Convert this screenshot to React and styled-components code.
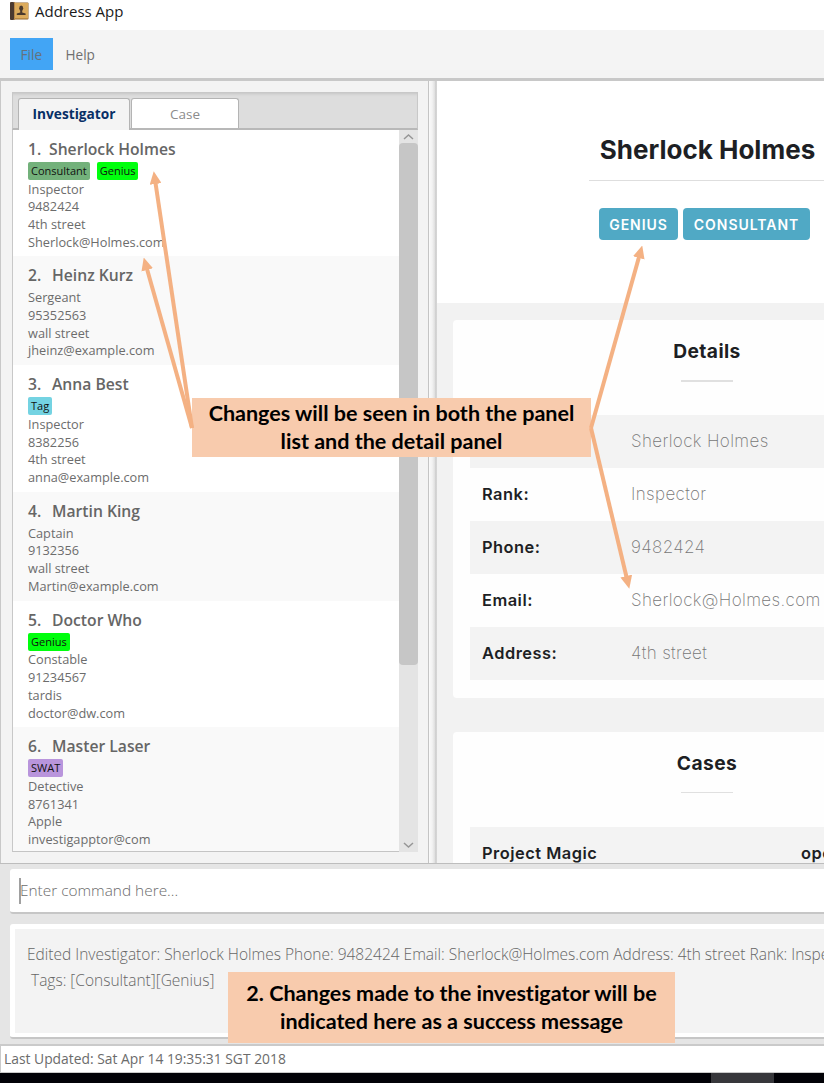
import React from "react";
import styled, { createGlobalStyle } from "styled-components";

const UI = '"Open Sans", "Noto Sans", sans-serif';
const WEB = 'Inter, "Open Sans", sans-serif';

const GlobalStyle = createGlobalStyle`
  * { box-sizing: border-box; }
  html, body { margin: 0; padding: 0; overflow: hidden; background: #fff; }
  body { font-family: ${UI}; color: #6b6b6b; }
`;

const Window = styled.div`
  position: relative;
  display: flex;
  flex-direction: column;
  width: 824px;
  height: 1083px;
  overflow: hidden;
  background: #e5e5e5;
`;

const TitleBar = styled.header`
  display: flex;
  align-items: center;
  flex: none;
  height: 30px;
  padding: 0 0 9px 10px;
  gap: 6px;
  background: #fff;
  color: #1a1a1a;
  font-size: 15px;
  line-height: 22px;
`;

const MenuBar = styled.nav`
  display: flex;
  flex: none;
  height: 51px;
  padding: 8px 10px 0;
  background: #f4f4f4;
  border-bottom: 3px solid #c8c8c8;
`;

const MenuItem = styled.div`
  height: 32px;
  padding: 0 ${(p) => (p.$active ? 10.5 : 13)}px;
  line-height: 33px;
  font-size: 13.6px;
  color: ${(p) => (p.$active ? "#65717c" : "#707070")};
  background: ${(p) => (p.$active ? "#42a5f5" : "transparent")};
`;

const Main = styled.main`
  display: flex;
  flex: none;
  height: 783px;
  border-bottom: 1px solid #bdbdbd;
  background: #f3f3f3;
`;

const ListPane = styled.section`
  flex: none;
  width: 429px;
  padding: 11px 10px 0 11px;
  border-left: 1px solid #c8c8c8;
  border-right: 1px solid #c4c4c4;
`;

const TabHeader = styled.div`
  display: flex;
  align-items: flex-end;
  height: 38px;
  padding-left: 5px;
  gap: 1px;
  background: #ddd;
  border: 1px solid #c8c8c8;
  border-bottom: 2px solid #b8b8b8;
  box-shadow: inset 0 3px 3px -2px #c4c4c4;
`;

const Tab = styled.div`
  width: ${(p) => p.$width}px;
  height: ${(p) => (p.$selected ? 32 : 30)}px;
  margin-bottom: ${(p) => (p.$selected ? -2 : 0)}px;
  border: 1px solid #b4b4b4;
  border-bottom: 0;
  border-radius: 3px 3px 0 0;
  background: ${(p) => (p.$selected ? "#f4f4f4" : "#fff")};
  color: ${(p) => (p.$selected ? "#072f66" : "#8c8c8c")};
  font-size: ${(p) => (p.$selected ? 13.7 : 13.5)}px;
  font-weight: ${(p) => (p.$selected ? 700 : 400)};
  line-height: 30px;
  text-align: center;
`;

const ListView = styled.div`
  display: flex;
  height: 722px;
  overflow: hidden;
`;

const Rows = styled.div`
  flex: 1;
  overflow: hidden;
  border-left: 1px solid #c8c8c8;
  border-bottom: 1px solid #c4c4c4;
  background: #fff;
`;

const Row = styled.article`
  height: ${(p) => (p.$tagged ? 126.4 : 109)}px;
  padding: 8px 0 0 15px;
  background: ${(p) => (p.$even ? "#f9f9f9" : "#fff")};
`;

const Name = styled.h2`
  display: flex;
  height: 24px;
  margin: 0;
  font-size: 15.7px;
  font-weight: 600;
  line-height: 22px;
  color: #666;
`;

const Index = styled.span`
  width: ${(p) => (p.$narrow ? 21 : 24)}px;
`;

const Tags = styled.div`
  display: flex;
  gap: 7px;
  height: 17.7px;
`;

const Tag = styled.span`
  height: 18px;
  padding: 0 3px;
  border-radius: 2px;
  background: ${(p) => p.$color};
  color: #111;
  font-size: 11px;
  line-height: 18px;
`;

const Info = styled.div`
  height: 17.7px;
  font-size: 12.75px;
  line-height: 19px;
  color: #6c6c6c;
`;

const ScrollBar = styled.div`
  display: flex;
  flex-direction: column;
  justify-content: space-between;
  width: 19px;
  background: #e4e4e4;
`;

const Thumb = styled.div`
  flex: none;
  height: 522px;
  margin-bottom: auto;
  border-radius: 4px;
  background: #c6c6c6;
`;

const Chevron = styled.svg`
  display: block;
  flex: none;
  width: 19px;
  height: 13px;
  fill: none;
  stroke: #969696;
  stroke-width: 1.5;
`;

const Divider = styled.div`
  flex: none;
  width: 8px;
  background: linear-gradient(90deg, #fafafa 0, #f2f2f2 40%, #dedede 75%, #cacaca 85%, #dcdcdc 100%);
`;

const Browser = styled.section`
  flex: none;
  width: 541px;
  height: 782px;
  overflow: hidden;
  background: #f2f2f2;
  color: #1d1f24;
  font-family: ${WEB};
`;

const Hero = styled.div`
  display: flex;
  flex-direction: column;
  align-items: center;
  height: 222px;
  padding-top: 48px;
  background: #fff;
`;

const HeroName = styled.h1`
  width: 237px;
  height: 52px;
  margin: 0;
  border-bottom: 1px solid #dedede;
  font-size: 26px;
  font-weight: 650;
  line-height: 42px;
  text-align: center;
  white-space: nowrap;
`;

const Badges = styled.div`
  display: flex;
  gap: 5px;
  margin: 27px 6px 0 0;
`;

const Badge = styled.span`
  width: ${(p) => p.$width}px;
  height: 32px;
  border-radius: 4px;
  background: #50a9c5;
  color: #fff;
  font-size: 14px;
  font-weight: 600;
  letter-spacing: 0.95px;
  line-height: 34px;
  text-align: center;
`;

const Card = styled.div`
  width: 508px;
  height: ${(p) => p.$height}px;
  margin: ${(p) => p.$top}px 0 0 16px;
  padding: 0 17px;
  border-radius: 4px;
  background: #fefefe;
`;

const CardTitle = styled.h3`
  height: 60px;
  margin: 0;
  padding-top: 17px;
  font-size: 19.2px;
  font-weight: 650;
  letter-spacing: 0.4px;
  line-height: 28px;
  text-align: center;
`;

const Rule = styled.div`
  width: 52px;
  height: ${(p) => p.$height}px;
  margin: 0 auto ${(p) => 35 - p.$height}px;
  background: #e0e0e0;
`;

const Field = styled.div`
  display: flex;
  height: 53.1px;
  padding-left: 12px;
  background: ${(p) => (p.$shaded ? "#f3f3f3" : "transparent")};
  line-height: 53px;
  white-space: nowrap;
`;

const Label = styled.div`
  width: ${(p) => p.$width}px;
  flex: none;
  font-size: 16.4px;
  font-weight: 600;
  letter-spacing: 0.5px;
`;

const Value = styled.div`
  color: #777;
  font-size: 17px;
  font-weight: 250;
  letter-spacing: 0.36px;
`;

const CommandBox = styled.div`
  display: flex;
  align-items: center;
  flex: none;
  width: 830px;
  height: 45px;
  margin: 5px 0 0 10px;
  padding-left: 9px;
  border-bottom: 2px solid #c6c6c6;
  border-radius: 3px;
  background: #fff;
  color: #6c6c6c;
  font-size: 15.4px;
  font-weight: 300;
`;

const Caret = styled.i`
  width: 2px;
  height: 26px;
  margin-right: -1px;
  background: #a0a0a0;
`;

const ResultBox = styled.div`
  flex: none;
  width: 900px;
  height: 115px;
  margin: 10px 0 0 10px;
  padding: 5px 5px 4px;
  border-bottom: 2px solid #c6c6c6;
  border-radius: 3px;
  background: #fff;
`;

const ResultText = styled.pre`
  height: 104px;
  margin: 0;
  padding: 12px;
  background: #f3f3f3;
  color: #666;
  font-family: ${UI};
  font-size: 15.5px;
  font-weight: 300;
  line-height: 26px;
`;

const StatusBar = styled.footer`
  flex: none;
  height: 29px;
  margin-top: 5px;
  padding-left: 3px;
  border: 1px solid #cacaca;
  border-top-width: 2px;
  border-right: 0;
  background: #fff;
  font-size: 13.85px;
  line-height: 26px;
`;

const Taskbar = styled.div`
  flex: 1;
  padding-left: 711px;
  background: #020207;
  &::before {
    content: "";
    display: block;
    width: 63px;
    height: 100%;
    background: #37373b;
  }
`;

const Arrows = styled.svg`
  position: absolute;
  left: 0;
  top: 0;
  fill: none;
  stroke: #f4b183;
  stroke-width: 4;
`;

const Callout = styled.div`
  position: absolute;
  left: ${(p) => p.$x}px;
  top: ${(p) => p.$y}px;
  width: ${(p) => p.$w}px;
  height: ${(p) => p.$h}px;
  padding-top: ${(p) => p.$pad}px;
  background: #f8cbad;
  color: #000;
  font-family: Lato, sans-serif;
  font-size: 21.55px;
  font-weight: 700;
  font-variant-ligatures: none;
  line-height: 28px;
  text-align: center;
  white-space: nowrap;
`;

const BookIcon = () => (
  <svg width="19" height="18" viewBox="0 0 19 18">
    <rect x="0.5" y="0.5" width="18" height="17" rx="1" fill="#94672d" />
    <rect x="5" y="1" width="13" height="15.5" fill="#dcab5c" />
    <rect x="0" y="0" width="4" height="18" rx="1" fill="#4b3a30" />
    <rect x="4" y="0" width="1" height="18" fill="#b98a4b" />
    <ellipse cx="11.2" cy="6.2" rx="2" ry="2.6" fill="#49392d" />
    <path d="M10.2 8h2v2.4l3.4 1.1v1.6H6.8v-1.6l3.4-1.1z" fill="#49392d" />
  </svg>
);

const investigators = [
  { name: "Sherlock Holmes", tags: [["Consultant", "#73b17b"], ["Genius", "#00ff0d"]], info: ["Inspector", "9482424", "4th street", "Sherlock@Holmes.com"] },
  { name: "Heinz Kurz", tags: [], info: ["Sergeant", "95352563", "wall street", "jheinz@example.com"] },
  { name: "Anna Best", tags: [["Tag", "#74d3e2"]], info: ["Inspector", "8382256", "4th street", "anna@example.com"] },
  { name: "Martin King", tags: [], info: ["Captain", "9132356", "wall street", "Martin@example.com"] },
  { name: "Doctor Who", tags: [["Genius", "#00ff0d"]], info: ["Constable", "91234567", "tardis", "doctor@dw.com"] },
  { name: "Master Laser", tags: [["SWAT", "#b995dc"]], info: ["Detective", "8761341", "Apple", "investigapptor@com"] },
];

const details = [
  ["Name:", "Sherlock Holmes"],
  ["Rank:", "Inspector"],
  ["Phone:", "9482424"],
  ["Email:", "Sherlock@Holmes.com"],
  ["Address:", "4th street"],
];

export default function App() {
  return (
    <Window>
      <GlobalStyle />
      <TitleBar>
        <BookIcon />
        Address App
      </TitleBar>
      <MenuBar>
        <MenuItem $active>File</MenuItem>
        <MenuItem>Help</MenuItem>
      </MenuBar>
      <Main>
        <ListPane>
          <TabHeader>
            <Tab $selected $width={112}>Investigator</Tab>
            <Tab $width={108}>Case</Tab>
          </TabHeader>
          <ListView>
            <Rows>
              {investigators.map((p, i) => (
                <Row key={p.name} $tagged={p.tags.length > 0} $even={i % 2 === 1}>
                  <Name>
                    <Index $narrow={i === 0}>{i + 1}.</Index>
                    <span>{p.name}</span>
                  </Name>
                  {p.tags.length > 0 && (
                    <Tags>
                      {p.tags.map(([label, color]) => (
                        <Tag key={label} $color={color}>{label}</Tag>
                      ))}
                    </Tags>
                  )}
                  {p.info.map((line) => (
                    <Info key={line}>{line}</Info>
                  ))}
                </Row>
              ))}
            </Rows>
            <ScrollBar>
              <Chevron viewBox="0 0 19 13"><path d="M5 9l4.5-4L14 9" /></Chevron>
              <Thumb />
              <Chevron viewBox="0 0 19 13"><path d="M5 4l4.5 4L14 4" /></Chevron>
            </ScrollBar>
          </ListView>
        </ListPane>
        <Divider />
        <Browser>
          <Hero>
            <HeroName>Sherlock Holmes</HeroName>
            <Badges>
              <Badge $width={79}>GENIUS</Badge>
              <Badge $width={127}>CONSULTANT</Badge>
            </Badges>
          </Hero>
          <Card $height={378} $top={17}>
            <CardTitle>Details</CardTitle>
            <Rule $height={2} />
            {details.map(([label, value], i) => (
              <Field key={label} $shaded={i % 2 === 0}>
                <Label $width={149}>{i > 0 && label}</Label>
                <Value>{value}</Value>
              </Field>
            ))}
          </Card>
          <Card $height={200} $top={34}>
            <CardTitle>Cases</CardTitle>
            <Rule $height={1} />
            <Field $shaded>
              <Label $width={319}>Project Magic</Label>
              <Label $width={60}>open</Label>
            </Field>
          </Card>
        </Browser>
      </Main>
      <CommandBox>
        <Caret />
        Enter command here...
      </CommandBox>
      <ResultBox>
        <ResultText>
          {"Edited Investigator: Sherlock Holmes Phone: 9482424 Email: Sherlock@Holmes.com Address: 4th street Rank: Inspector\n Tags: [Consultant][Genius]"}
        </ResultText>
      </ResultBox>
      <StatusBar>Last Updated: Sat Apr 14 19:35:31 SGT 2018</StatusBar>
      <Taskbar />
      <Callout $x={192} $y={398} $w={399} $h={59} $pad={1}>
        Changes will be seen in both the panel
        <br />
        list and the detail panel
      </Callout>
      <Callout $x={228} $y={972} $w={447} $h={71} $pad={7}>
        2. Changes made to the investigator will be
        <br />
        indicated here as a success message
      </Callout>
      <Arrows width="824" height="1083" viewBox="0 0 824 1083">
        <defs>
          <marker id="head" markerUnits="userSpaceOnUse" markerWidth="13" markerHeight="12" refX="1" refY="6" orient="auto">
            <path d="M0 0L13 6L0 12z" fill="#f4b183" stroke="none" />
          </marker>
        </defs>
        <path d="M192 428L155.5 183" markerEnd="url(#head)" />
        <path d="M192 428L147 269" markerEnd="url(#head)" />
        <path d="M591 428L639 257" markerEnd="url(#head)" />
        <path d="M591 428L626.5 577" markerEnd="url(#head)" />
      </Arrows>
    </Window>
  );
}
